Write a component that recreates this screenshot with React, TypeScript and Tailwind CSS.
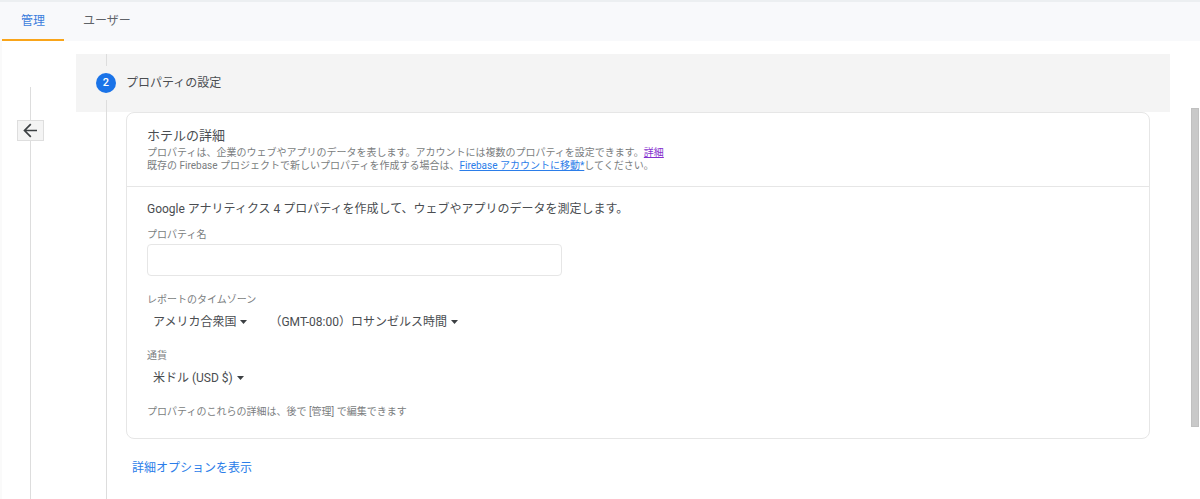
import { useState } from 'react';

const tabs = ['管理', 'ユーザー'];

function BackArrow() {
  return (
    <svg width="15" height="15" viewBox="0 0 15 15" fill="none" stroke="#3c4043" strokeWidth="1.7" aria-hidden="true">
      <path d="M14 7.5H1.8M7.8 1.2L1.5 7.5l6.3 6.3" />
    </svg>
  );
}

type PickerProps = {
  label: string;
  options: string[];
};

function Picker({ label, options }: PickerProps) {
  return (
    <span className="flex items-center gap-1">
      <select
        aria-label={label}
        className="field-sizing-content appearance-none bg-transparent text-[12px] leading-4 text-[#4a4d51] outline-none"
      >
        {options.map((option) => (
          <option key={option}>{option}</option>
        ))}
      </select>
      <svg width="7" height="4" viewBox="0 0 7 4" fill="#3c4043" aria-hidden="true">
        <path d="M0 0h7L3.5 4z" />
      </svg>
    </span>
  );
}

export default function App() {
  const [active, setActive] = useState('管理');
  const [name, setName] = useState('');

  return (
    <div className="flex min-h-screen flex-col bg-white font-['Roboto','Noto_Sans_CJK_JP',sans-serif] text-[12px] leading-4 text-[#4a4d51]">
      <header className="border-t-2 border-[#eceff1] bg-[#f8f9fb]">
        <nav className="ml-0.5 flex">
          {tabs.map((tab) => (
            <button
              key={tab}
              type="button"
              onClick={() => setActive(tab)}
              className={`h-[39px] border-b-2 px-[19px] ${
                active === tab ? 'border-[#f9a51a] text-[#3b7ddd]' : 'border-transparent text-[#5f6368]'
              }`}
            >
              {tab}
            </button>
          ))}
        </nav>
      </header>

      <div className="flex flex-1">
        {/* Collapsed side panel */}
        <aside className="flex w-[76px] shrink-0 flex-col border-l-2 border-[#fafafa] pt-[46px]">
          <div className="ml-7 h-[33px] w-px bg-[#dddddd]" />
          <button
            type="button"
            aria-label="戻る"
            className="ml-[15px] flex h-[21px] w-[27px] items-center justify-center border border-[#dedede] bg-[#f4f4f4]"
          >
            <BackArrow />
          </button>
          <div className="ml-7 w-px flex-1 bg-[#dddddd]" />
        </aside>

        <main className="flex min-w-0 flex-1 flex-col pt-[13px]">
          <div className="flex h-[58px] gap-2.5 bg-[#f4f4f4] pl-5">
            <div className="flex w-5 flex-col items-center">
              <div className="h-3 w-px bg-[#dddddd]" />
              <span className="my-[7px] flex size-5 shrink-0 items-center justify-center rounded-full bg-[#1a73e8] text-[11px] font-medium text-white">
                2
              </span>
              <div className="w-px flex-1 bg-[#dddddd]" />
            </div>
            <h1 className="self-center">プロパティの設定</h1>
          </div>

          <div className="flex flex-1 gap-2.5 pr-5 pl-5">
            <div className="flex w-5 shrink-0 justify-center">
              <div className="w-px bg-[#dddddd]" />
            </div>

            <div className="min-w-0 flex-1">
              <section className="rounded-lg border border-[#e6e6e6] bg-white">
                <div className="border-b border-[#e6e6e6] px-5 pt-[13px] pb-3.5">
                  <h2 className="text-[13px] leading-5">ホテルの詳細</h2>
                  <p className="text-[10px] leading-[13px] text-[#7a7d80]">
                    プロパティは、企業のウェブやアプリのデータを表します。アカウントには複数のプロパティを設定できます。
                    <a href="#details" className="text-[#8430ce] underline">詳細</a>
                    <br />
                    既存の Firebase プロジェクトで新しいプロパティを作成する場合は、
                    <a href="#firebase" className="text-[#2b7de9] underline">Firebase アカウントに移動*</a>
                    してください。
                  </p>
                </div>

                <div className="px-5 pt-3.5 pb-[18px]">
                  <h3>Google アナリティクス 4 プロパティを作成して、ウェブやアプリのデータを測定します。</h3>

                  <label htmlFor="property-name" className="mt-2.5 block text-[10px] text-[#7a7d80]">
                    プロパティ名
                  </label>
                  <input
                    id="property-name"
                    type="text"
                    value={name}
                    onChange={(e) => setName(e.target.value)}
                    className="mt-px block h-8 w-full max-w-[415px] rounded border border-[#e6e6e6] px-2 outline-none"
                  />

                  <p className="mt-4 text-[10px] text-[#7a7d80]">レポートのタイムゾーン</p>
                  <div className="mt-1.5 flex gap-[22px] pl-1.5">
                    <Picker label="レポートのタイムゾーン（国）" options={['アメリカ合衆国']} />
                    <Picker label="レポートのタイムゾーン" options={['（GMT-08:00）ロサンゼルス時間']} />
                  </div>

                  <p className="mt-[18px] text-[10px] text-[#7a7d80]">通貨</p>
                  <div className="mt-1.5 flex pl-1.5">
                    <Picker label="通貨" options={['米ドル (USD $)']} />
                  </div>

                  <p className="mt-[18px] text-[10px] text-[#7a7d80]">
                    プロパティのこれらの詳細は、後で [管理] で編集できます
                  </p>
                </div>
              </section>

              <button type="button" className="mt-[21px] ml-1.5 text-[#2b7de9]">
                詳細オプションを表示
              </button>
            </div>
          </div>
        </main>

        {/* Scroll track */}
        <div className="flex w-[30px] shrink-0 justify-end pt-[67px] pr-px">
          <div className="h-[319px] w-2 border border-[#c0c0c0] bg-[#c9c9c9]" />
        </div>
      </div>
    </div>
  );
}
